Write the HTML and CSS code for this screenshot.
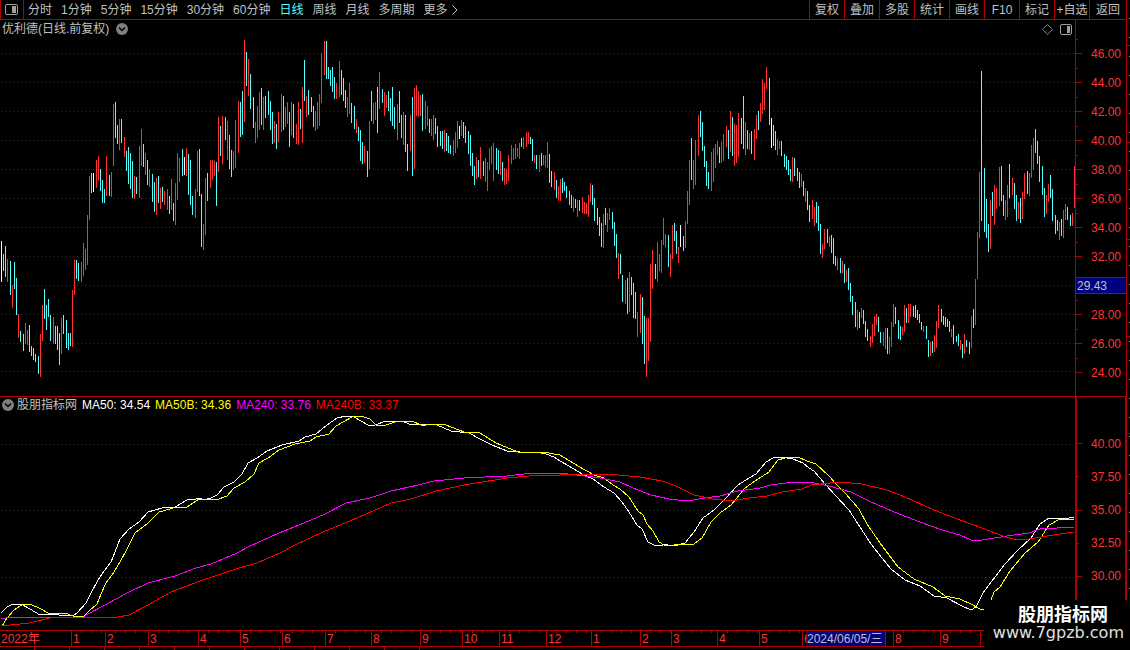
FILE: index.html
```
<!DOCTYPE html>
<html lang="zh-CN">
  <head>
    <meta charset="UTF-8" />
    <meta name="viewport" content="width=device-width, initial-scale=1.0" />
    <title>优利德 日线</title>
    <link rel="stylesheet" href="styles.css">
  </head>
  <body>
    <div class="window">
      <header class="toolbar">
        <button type="button" class="layout-btn" aria-label="布局">
          <svg width="13" height="11" viewBox="0 0 13 11">
            <rect x="0.5" y="0.5" width="12" height="10" rx="1.5" fill="none" stroke="#a0a0a0" />
            <rect x="7" y="2" width="4" height="7" fill="#a0a0a0" />
          </svg>
        </button>
        <nav class="periods">
          <button type="button">分时</button>
          <button type="button">1分钟</button>
          <button type="button">5分钟</button>
          <button type="button">15分钟</button>
          <button type="button">30分钟</button>
          <button type="button">60分钟</button>
          <button type="button" class="active">日线</button>
          <button type="button">周线</button>
          <button type="button">月线</button>
          <button type="button">多周期</button>
          <button type="button" class="more">更多
            <svg width="6" height="10" viewBox="0 0 6 10"><path d="M0.5 0.5L5 5L0.5 9.5" fill="none" stroke="#c0c0c0" /></svg>
          </button>
        </nav>
        <div class="tools">
          <button type="button">复权</button>
          <button type="button">叠加</button>
          <button type="button">多股</button>
          <button type="button">统计</button>
          <button type="button">画线</button>
          <button type="button">F10</button>
          <button type="button">标记</button>
          <button type="button">+自选</button>
          <button type="button">返回</button>
        </div>
      </header>

      <section class="pane price">
        <div class="pane-title">
          <span>优利德(日线.前复权)</span>
          <button type="button" aria-label="展开">
            <svg width="12" height="12" viewBox="0 0 12 12">
              <circle cx="6" cy="6" r="6" fill="#808080" />
              <path d="M3 4.5L6 7.5L9 4.5" fill="none" stroke="#000" stroke-width="1.5" />
            </svg>
          </button>
          <div class="pane-icons">
            <svg width="11" height="11" viewBox="0 0 11 11"><path d="M5.5 0.5L10.5 5.5L5.5 10.5L0.5 5.5Z" fill="none" stroke="#808080" /></svg>
            <svg width="12" height="11" viewBox="0 0 12 11">
              <rect x="0.5" y="0.5" width="11" height="10" rx="1.5" fill="none" stroke="#a0a0a0" />
              <rect x="7" y="2" width="3" height="7" fill="#a0a0a0" />
            </svg>
          </div>
        </div>
        <svg class="chart" viewBox="0 38 1075 358" preserveAspectRatio="none">
          <path class="grid" d="M1 53.5H1075M1 82.5H1075M1 111.5H1075M1 140.5H1075M1 169.5H1075M1 198.5H1075M1 227.5H1075M1 256.5H1075M1 285.5H1075M1 314.5H1075M1 343.5H1075M1 371.5H1075" />
          <path id="upBars" class="up" />
          <path id="downBars" class="down" />
          <path id="flatBars" class="flat" />
        </svg>
        <ul class="scale">
          <li>46.00</li>
          <li>44.00</li>
          <li>42.00</li>
          <li>40.00</li>
          <li>38.00</li>
          <li>36.00</li>
          <li>34.00</li>
          <li>32.00</li>
          <li class="cursor-price">29.43</li>
          <li>28.00</li>
          <li>26.00</li>
          <li>24.00</li>
        </ul>
      </section>

      <section class="pane indicator">
        <div class="pane-title">
          <button type="button" aria-label="展开">
            <svg width="12" height="12" viewBox="0 0 12 12">
              <circle cx="6" cy="6" r="6" fill="#808080" />
              <path d="M3 4.5L6 7.5L9 4.5" fill="none" stroke="#000" stroke-width="1.5" />
            </svg>
          </button>
          <span>股朋指标网</span>
          <span class="ma50">MA50: 34.54</span>
          <span class="ma50b">MA50B: 34.36</span>
          <span class="ma240">MA240: 33.76</span>
          <span class="ma240b">MA240B: 33.37</span>
        </div>
        <svg class="chart" viewBox="0 413 1075 217" preserveAspectRatio="none">
          <path class="grid" d="M1 444.5H1075M1 510.5H1075M1 577.5H1075" />
          <polyline id="ma50" class="line white" />
          <polyline id="ma50b" class="line yellow" />
          <polyline id="ma240" class="line magenta" />
          <polyline id="ma240b" class="line red" />
        </svg>
        <ul class="scale">
          <li>40.00</li>
          <li>37.50</li>
          <li>35.00</li>
          <li>32.50</li>
          <li>30.00</li>
        </ul>
      </section>

      <ol id="timeline" class="timeline"></ol>
      <footer class="status">
        <i></i><i></i><i></i><i></i><i></i><i></i><i></i><i></i><i></i><i></i><i></i><i></i>
      </footer>
    </div>
    <aside class="side"><i></i><i></i><i></i><i></i><i></i></aside>

    <div class="watermark">
      <strong>股朋指标网</strong>
      <span>www.7gpzb.com</span>
    </div>

    <script src="script.js"></script>
  </body>
</html>
```
FILE: styles.css
```
* {
  box-sizing: border-box;
}
body {
  position: relative;
  display: flex;
  height: 100vh;
  margin: 0;
  overflow: hidden;
  background-color: #000;
  color: #c0c0c0;
  font-family: "Liberation Sans", "Noto Sans CJK SC", sans-serif;
  font-size: 12px;
  line-height: 16px;
}
button {
  padding: 0;
  border: none;
  background: none;
  color: inherit;
  font: inherit;
  white-space: nowrap;
  cursor: pointer;
}
svg {
  display: block;
}
ul, ol {
  margin: 0;
  padding: 0;
  list-style: none;
}
.window {
  display: flex;
  flex-direction: column;
  flex: 1;
  min-width: 0;
  border-right: 1px solid #b00000;
}

/* toolbar */
.toolbar {
  display: flex;
  height: 20px;
  border-bottom: 1px solid #b00000;
  border-left: 1px solid #b00000;
}
.layout-btn {
  width: 23px;
  padding-left: 4px;
  border-right: 1px solid #b00000;
}
.periods {
  display: flex;
  gap: 9px;
  padding-left: 4px;
}
.periods .active {
  color: #54ffff;
}
.periods .more {
  display: flex;
  align-items: center;
  gap: 4px;
}
.tools {
  display: flex;
  margin-left: auto;
}
.tools button {
  width: 35px;
  border-left: 1px solid #b00000;
}
.tools button:last-child {
  width: 37px;
}

/* panes */
.pane {
  display: grid;
  grid-template-columns: minmax(0, 1fr) 51px;
  grid-template-rows: auto minmax(0, 1fr);
  min-height: 0;
}
.price {
  flex: 376 1 0;
}
.indicator {
  flex: 233 1 0;
  border-top: 1px solid #b00000;
}
.pane-title {
  display: flex;
  align-items: center;
  gap: 5px;
  height: 18px;
  padding-left: 2px;
  white-space: nowrap;
}
.price .pane-title {
  gap: 7px;
}
.indicator .pane-title {
  height: 16px;
}
.indicator .pane-title button {
  margin-right: -2px;
}
.pane-icons {
  display: flex;
  gap: 7px;
  margin-left: auto;
  padding-right: 3px;
}
.chart {
  width: 100%;
  height: 100%;
}
.scale {
  display: flex;
  flex-direction: column;
  grid-column: 2;
  grid-row: 1 / 3;
  padding: 19px 0 9px;
  border-left: 1px solid #b00000;
  color: #ff3232;
}
.scale li {
  display: flex;
  flex: 1;
  align-items: center;
  padding-left: 15px;
  background:
    linear-gradient(#b00000, #b00000) left center / 6px 1px no-repeat,
    linear-gradient(#b00000, #b00000) left top / 2px 1px no-repeat;
}
.scale .cursor-price {
  flex: none;
  height: 17px;
  margin: 6px 0;
  padding-left: 1px;
  border: solid #b00000;
  border-width: 1px 0;
  background: #000080;
  color: #c0c0c0;
}
.indicator .scale {
  padding: 30px 0 37px;
  border-left-width: 2px;
  border-right: 1px solid #b00000;
}
.indicator .scale li {
  padding-left: 14px;
  background: linear-gradient(#b00000, #b00000) left center / 5px 1px no-repeat;
}
.indicator .scale li:nth-child(even) {
  background-size: 2px 1px;
}

/* drawing */
.grid {
  fill: none;
  stroke: #a00000;
  stroke-dasharray: 1 3;
  shape-rendering: crispEdges;
}
.up, .down, .flat {
  shape-rendering: crispEdges;
}
.up { fill: #ff3232; }
.down { fill: #54ffff; }
.flat { fill: #fff; }
.line {
  fill: none;
  stroke-width: 1;
  vector-effect: non-scaling-stroke;
  shape-rendering: crispEdges;
}
.white { stroke: #fff; }
.yellow { stroke: #ff0; }
.magenta { stroke: #f0f; }
.red { stroke: #f00; }
.ma50 { color: #fff; }
.ma50b { color: #ff0; }
.ma240 { color: #f0f; }
.ma240b { color: #f00; }

/* time axis */
.timeline {
  display: grid;
  height: 17px;
  border: solid #b00000;
  border-width: 1px 0;
  color: #ff3232;
}
.timeline li {
  min-width: 0;
  padding-left: 1px;
  overflow: hidden;
  border-left: 1px solid #b00000;
  background: repeating-linear-gradient(to right, transparent 0 9px, #b00000 9px 10px) left top / 100% 2px no-repeat;
  white-space: nowrap;
}
.timeline li:first-child {
  border-left: none;
  background: none;
}
.timeline .cursor-date {
  padding-left: 0;
  border-left: none;
  background: #000080;
  color: #c0c0c0;
}
.status {
  display: flex;
  height: 3px;
}
.status i {
  width: 35px;
  border-right: 1px solid #b00000;
}

/* neighbouring panel, only its edge is in view */
.side {
  display: flex;
  flex-direction: column;
  width: 3px;
  background: repeating-linear-gradient(transparent 0 18px, #909090 18px 19px) right top / 1px 100% no-repeat;
}
.side i {
  height: 97px;
  border-bottom: 1px solid #b00000;
}
.side i:first-child {
  height: 46px;
}

.watermark {
  position: absolute;
  right: 0;
  bottom: 0;
  display: flex;
  flex-direction: column;
  align-items: flex-end;
  width: 146px;
  height: 50px;
  padding: 3px 6px 0 0;
  background: #000;
  color: #e0e0e0;
  font-family: "DejaVu Sans", sans-serif;
  font-size: 16px;
  line-height: 20px;
}
.watermark strong {
  margin-right: 16px;
  color: #fff;
  font-family: "Noto Sans CJK SC", sans-serif;
  font-size: 18px;
}
```
FILE: script.js
```
// x, high, low, colour (u = up, d = down, f = flat)
const candles = `
1 241 282 f,3 254 271 d,5 246 277 d,7 259 282 u,10 261 295 d,12 285 308 u,14 262 289 d,16 278 315 d,18 314 338 u,20 331 342 d,
23 334 351 d,25 323 344 u,27 330 345 u,29 325 352 d,31 346 356 d,33 348 360 d,35 354 362 d,38 356 374 d,40 334 377 u,42 305 341 u,
44 289 319 d,46 305 330 d,48 299 317 d,50 315 341 d,53 317 344 u,55 326 344 d,57 326 350 d,59 333 365 d,61 318 354 u,63 315 334 d,
66 320 348 d,68 333 350 d,70 333 346 d,72 290 347 u,74 260 295 u,76 260 279 d,78 263 281 d,81 262 282 u,83 243 276 u,85 249 270 u,
87 215 265 u,89 176 220 u,91 173 193 d,93 173 192 f,96 160 188 u,98 156 181 u,100 169 191 d,102 180 203 d,104 189 203 d,106 156 196 u,
109 175 196 d,111 172 197 u,113 104 166 u,115 102 138 d,117 125 144 d,119 119 150 u,121 119 143 d,124 137 157 u,126 151 171 d,128 147 184 d,
130 153 189 d,132 161 198 d,134 176 199 u,136 177 194 d,139 146 198 u,141 129 166 u,143 144 167 d,145 153 175 u,147 160 185 d,149 169 187 u,
152 174 202 d,154 182 212 d,156 178 215 u,158 176 203 d,160 188 209 u,162 187 202 d,164 191 205 u,167 189 210 u,169 196 214 d,171 179 210 u,
173 203 221 d,175 183 225 u,177 153 200 u,179 158 182 u,182 149 176 d,184 157 175 f,186 148 176 u,188 154 195 d,190 160 205 d,192 196 215 d,
195 189 218 u,197 151 192 u,199 149 196 d,201 194 247 d,203 224 250 u,205 178 235 u,207 173 201 d,210 160 188 u,212 160 180 u,214 161 176 u,
216 162 206 d,218 117 172 u,220 126 156 d,222 116 164 u,225 117 140 d,227 121 160 u,229 135 169 d,231 150 177 d,233 151 170 u,235 120 168 u,
238 101 153 u,240 102 137 d,242 91 135 d,244 40 122 u,246 52 86 d,248 59 96 u,250 74 109 d,253 97 128 d,255 122 143 u,257 106 138 u,
259 92 130 u,261 88 125 d,263 97 130 u,265 96 118 d,268 91 115 d,270 101 130 d,272 112 144 d,274 121 143 u,276 124 149 d,278 112 142 u,
281 94 132 u,283 96 130 d,285 107 127 u,287 102 124 u,289 112 147 d,291 102 135 u,293 104 138 d,296 124 144 u,298 102 145 u,300 109 129 d,
302 87 143 u,304 60 101 d,306 96 117 u,308 90 115 d,311 97 112 d,313 106 127 d,315 111 131 u,317 102 129 u,319 94 126 u,321 53 103 u,
324 41 75 u,326 41 79 d,328 67 79 d,330 70 86 d,332 67 92 d,334 77 99 d,336 83 99 u,339 61 97 u,341 70 95 d,343 78 101 d,
345 90 108 d,347 97 117 u,349 83 114 u,351 103 123 d,354 106 129 d,356 119 133 u,358 127 141 d,360 130 161 d,362 142 164 d,364 146 163 u,
367 151 177 d,369 121 169 u,371 91 121 d,373 103 124 u,375 102 120 u,377 87 133 d,379 72 109 u,382 89 103 d,384 92 116 u,386 95 108 u,
388 91 111 d,390 98 121 d,392 87 126 d,394 107 129 d,397 104 140 u,399 91 123 d,401 115 138 d,403 112 145 u,405 115 152 d,407 144 171 d,
410 115 151 u,412 97 176 d,414 88 169 u,416 85 116 u,418 91 117 u,420 95 116 u,422 94 131 d,425 101 129 u,427 106 126 u,429 119 133 d,
431 119 136 u,433 115 140 u,435 118 134 d,437 126 147 d,440 131 146 d,442 131 149 d,444 130 152 u,446 133 151 d,448 136 153 d,450 145 154 d,
453 140 156 u,455 132 153 u,457 121 148 u,459 126 139 f,461 120 136 u,463 122 138 d,465 126 143 d,468 131 154 d,470 135 166 d,472 153 176 d,
474 166 185 d,476 157 179 u,478 160 177 d,480 147 179 u,483 161 176 d,485 158 182 u,487 162 191 u,489 148 170 u,491 146 164 u,493 143 181 u,
496 148 170 d,498 150 174 d,500 151 175 u,502 162 181 d,504 168 185 u,506 169 184 u,508 155 181 u,511 145 164 u,513 148 160 u,515 144 159 u,
517 148 157 u,519 143 159 u,521 138 147 d,523 137 149 u,526 132 147 u,528 132 144 u,530 137 144 d,532 139 161 d,534 155 163 u,536 155 169 d,
539 155 172 u,541 153 166 d,543 155 165 u,545 155 167 u,547 142 168 u,549 154 183 d,551 171 187 d,554 172 190 u,556 180 198 d,558 186 201 u,
560 179 201 u,562 178 193 d,564 182 191 d,566 186 198 d,569 191 205 d,571 195 208 d,573 197 212 u,575 199 208 d,577 200 217 u,579 200 211 d,
582 197 213 u,584 202 214 u,586 203 214 u,588 195 217 u,590 183 202 u,592 185 205 d,594 198 221 d,597 208 225 d,599 217 236 d,601 223 247 d,
603 214 248 u,605 208 225 d,607 213 232 u,609 208 220 u,612 212 229 d,614 222 246 d,616 234 258 d,618 253 279 u,620 254 274 d,622 275 302 d,
625 280 304 u,627 278 314 d,629 272 312 u,631 277 295 d,633 283 318 d,635 292 319 d,637 312 337 u,640 294 333 u,642 297 344 d,644 316 364 d,
646 318 377 u,648 318 361 u,650 264 342 u,652 250 289 u,655 264 279 d,657 242 282 u,659 254 271 u,661 240 273 u,663 218 245 u,665 234 247 u,
668 235 267 d,670 254 277 u,672 225 259 u,674 223 241 d,676 231 254 d,678 247 263 u,680 225 247 f,683 236 251 d,685 221 248 u,687 191 224 u,
689 160 205 u,691 138 180 d,693 160 189 u,695 140 185 u,698 115 156 u,700 111 137 d,702 122 151 d,704 146 167 d,706 161 186 d,708 172 189 d,
711 152 191 u,713 148 182 u,715 144 168 u,717 141 155 u,719 147 163 d,721 142 163 u,723 134 161 u,726 126 147 u,728 130 159 d,730 111 152 u,
732 117 156 d,734 124 166 u,736 125 163 u,738 113 157 u,741 118 144 d,743 96 149 d,745 122 155 u,747 130 149 d,749 133 150 u,751 131 154 d,
754 129 160 u,756 115 139 u,758 111 130 d,760 103 122 u,762 79 114 u,764 83 110 u,766 67 89 u,769 78 125 d,771 118 148 f,773 125 146 d,
775 131 150 d,777 139 155 u,779 141 149 u,781 141 156 d,784 154 167 d,786 156 170 d,788 160 175 d,790 169 181 d,792 157 182 u,794 158 176 d,
797 168 181 d,799 172 188 d,801 174 187 u,803 181 196 d,805 188 202 u,807 191 210 d,809 205 222 d,812 200 219 u,814 207 226 u,816 202 223 d,
818 206 231 d,820 224 254 d,822 244 258 u,824 229 249 u,827 229 243 d,829 236 247 u,831 235 253 d,833 238 264 d,835 256 266 d,837 258 270 u,
840 258 273 d,842 261 273 u,844 264 283 d,846 270 282 u,848 268 290 d,850 283 302 d,852 296 315 d,855 302 327 d,857 310 330 u,859 312 328 d,
861 308 318 u,863 310 324 d,865 321 337 d,867 329 341 d,870 336 347 u,872 324 343 u,874 316 336 u,876 314 325 u,878 317 332 d,880 332 343 d,
883 332 346 u,885 328 349 u,887 328 354 d,889 337 354 u,891 322 347 u,893 304 327 u,895 307 324 d,898 320 339 d,900 326 340 d,902 327 335 u,
904 305 332 u,906 308 323 d,908 304 323 u,910 304 317 u,913 306 317 d,915 305 318 d,917 310 320 d,919 314 323 d,921 322 330 d,923 326 332 u,
926 326 339 d,928 340 357 d,930 342 356 u,932 341 353 d,934 335 352 u,936 321 348 u,938 305 328 u,941 309 322 d,943 316 325 d,945 317 327 d,
947 319 327 d,949 321 332 d,951 329 337 u,953 325 344 d,956 336 342 d,958 334 346 d,960 340 350 u,962 344 358 d,964 334 354 u,966 340 347 d,
969 342 354 d,971 316 348 u,973 309 328 d,975 279 325 u,977 232 279 u,979 172 238 u,981 71 221 d,984 168 232 d,986 199 238 d,988 224 252 d,
990 200 249 u,992 192 216 d,994 185 225 u,996 188 209 u,999 167 206 u,1001 166 201 d,1003 195 216 d,1005 200 220 u,1007 185 217 u,1009 164 198 d,
1012 178 195 u,1014 183 209 d,1016 195 221 d,1018 202 219 u,1020 198 223 d,1022 192 219 u,1024 173 199 u,1027 171 194 d,1029 173 196 u,1031 145 178 u,
1033 138 170 u,1035 129 153 d,1037 141 164 d,1039 156 182 d,1042 166 195 d,1044 188 217 d,1046 195 214 u,1048 184 202 u,1050 175 198 d,1052 189 221 d,
1055 215 234 d,1057 220 231 d,1059 222 240 u,1061 219 236 d,1063 210 238 u,1065 204 220 u,1067 207 220 d,1070 215 226 d,1072 213 226 u,1074 166 208 u`;

const lines = {
  ma50: "1,613 7,607 13,604 21,604 30,609 40,615 46,614 59,615 73,616 77,613 86,603 91,593 98,580 104,571 111,562 115,552 120,539 129,529 139,522 148,512 162,508 175,507 187,500 196,499 199,498 204,500 211,498 217,495 224,487 234,482 242,474 248,463 257,458 267,451 282,445 299,441 305,437 316,434 327,425 337,418 346,416 354,417 361,421 368,425 375,425 386,421 404,422 412,425 420,424 437,425 451,431 469,433 480,439 492,445 507,451 520,452 536,452 546,454 554,457 560,461 569,466 582,474 593,479 604,487 614,493 622,502 629,512 637,525 642,529 648,542 654,545 660,546 665,544 671,546 678,545 685,543 694,532 703,518 714,510 725,499 738,485 749,478 756,474 766,462 773,458 782,457 793,459 803,463 809,468 814,471 825,484 836,496 849,510 860,527 871,544 882,558 891,569 905,580 920,586 934,596 947,598 962,606 971,610 976,607 983,593 992,581 1005,564 1018,550 1031,538 1040,524 1049,518 1058,519 1069,518 1074,517",
  ma50b: "2,626 7,618 14,610 23,604 32,605 39,608 50,614 59,613 68,614 75,617 84,616 89,611 97,604 101,594 106,583 114,572 120,562 127,549 135,533 148,523 159,512 177,507 187,507 193,503 199,499 209,499 216,500 227,496 234,488 245,482 254,474 259,463 268,458 279,450 295,444 310,441 316,437 329,434 336,426 352,417 361,416 370,419 377,426 386,425 395,422 412,421 423,426 429,424 446,425 464,432 480,433 496,443 518,452 543,452 560,455 578,466 594,475 604,478 613,485 620,489 629,497 638,511 643,515 647,524 653,531 659,542 664,545 674,545 694,544 702,538 711,522 720,513 731,505 745,488 758,479 769,472 778,460 785,458 798,457 807,461 816,464 829,476 836,484 845,493 859,509 867,524 880,543 898,567 914,579 933,587 945,596 960,599 971,604 980,609 986,610 991,600 994,592 1000,587 1010,571 1025,553 1038,542 1049,525 1060,519 1074,519",
  ma240: "1,619 11,617 32,617 43,617 84,617 86,615 107,604 127,593 148,583 175,576 196,568 211,564 237,553 250,546 279,533 304,523 325,514 346,503 370,498 391,491 418,485 434,481 464,478 507,476 532,473 560,473 585,476 600,478 620,482 633,488 651,495 669,499 687,501 705,498 720,496 738,491 760,488 771,485 793,482 814,483 829,486 851,492 869,501 894,512 920,522 942,530 960,535 971,540 982,540 1007,536 1029,533 1040,529 1074,527",
  ma240b: "1,626 29,623 50,618 71,617 118,617 129,615 148,605 171,592 200,581 239,568 257,563 282,552 293,546 323,532 357,518 391,503 411,499 436,491 464,485 507,478 529,476 560,475 574,474 607,474 640,477 662,481 676,486 694,495 713,499 731,501 749,498 767,496 782,492 802,489 811,485 840,482 862,484 887,490 905,497 934,510 960,520 982,528 1003,536 1016,540 1029,539 1047,536 1074,532"
};

// label, share of the axis, class
const months = [
  ["2022年", 71], ["1", 34], ["2", 43], ["3", 50], ["4", 42], ["5", 42], ["6", 43], ["7", 46], ["8", 49],
  ["9", 42], ["10", 37], ["11", 47], ["12", 45], ["1", 49], ["2", 31], ["3", 46], ["4", 42], ["5", 43],
  ["6", 5], ["2024/06/05/三", 78, "cursor-date"], ["", 8], ["8", 47], ["9", 40], ["", 146]
];

const paths = { u: "", d: "", f: "" };
candles.trim().split(",").forEach((row) => {
  const [x, high, low, type] = row.trim().split(" ");
  paths[type] += `M${x} ${high}h1V${low}h-1z`;
});
document.getElementById("upBars").setAttribute("d", paths.u);
document.getElementById("downBars").setAttribute("d", paths.d);
document.getElementById("flatBars").setAttribute("d", paths.f);

for (const id in lines) {
  document.getElementById(id).setAttribute("points", lines[id]);
}

const timeline = document.getElementById("timeline");
timeline.style.gridTemplateColumns = months.map((m) => `minmax(0, ${m[1]}fr)`).join(" ");
months.forEach(([label, share, className]) => {
  const li = document.createElement("li");
  li.textContent = label;
  if (className) li.className = className;
  timeline.appendChild(li);
});
```
